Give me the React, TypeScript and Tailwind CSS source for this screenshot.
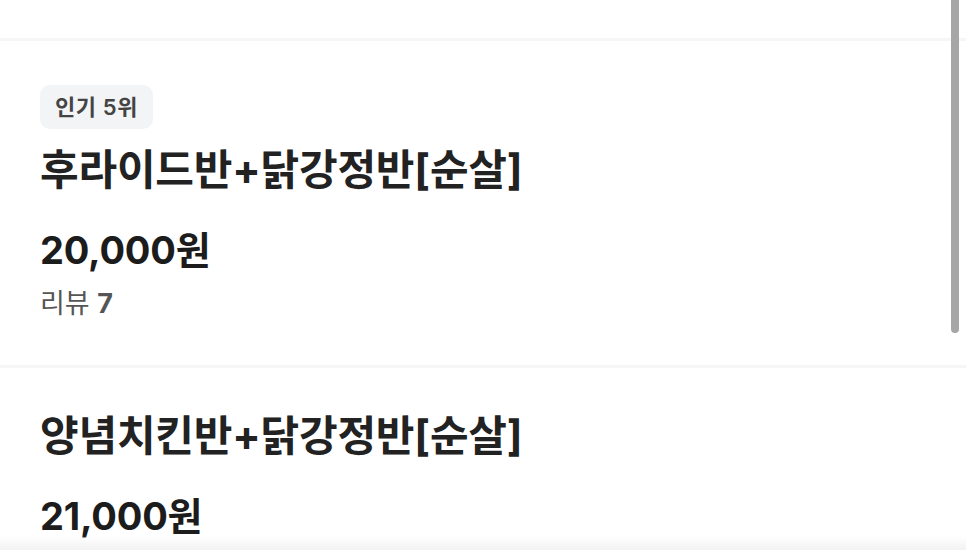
import React from "react";

type MenuItem = {
  rank?: number;
  name: string;
  price: string;
  reviews?: number;
};

const items: MenuItem[] = [
  { rank: 5, name: "후라이드반+닭강정반[순살]", price: "20,000원", reviews: 7 },
  { name: "양념치킨반+닭강정반[순살]", price: "21,000원" },
];

const font = { fontFamily: 'Inter, "Noto Sans CJK KR", sans-serif' };

const MenuRow: React.FC<{ item: MenuItem }> = ({ item }) => (
  <div className="px-10 pt-[44px] pb-[45px] border-b-[3px] border-[#f6f6f6]">
    {item.rank && (
      <div className="mb-[17px]">
        <span className="inline-flex items-center h-[44px] px-[15px] rounded-[10px] bg-[#f3f4f6] text-[22px] font-semibold text-[#444] tracking-[0.6px]">
          인기 {item.rank}위
        </span>
      </div>
    )}
    <h2 className="text-[42px] leading-[48px] font-bold text-[#222] tracking-[-0.2px]">
      {item.name}
    </h2>
    <p className="mt-[34px] text-[38px] leading-[44px] font-bold text-[#1c1c1c] tracking-[-0.2px]">
      {item.price}
    </p>
    {item.reviews !== undefined && (
      <p className="mt-[16px] text-[27px] leading-[32px] text-[#555]">
        리뷰 <span className="font-bold">{item.reviews}</span>
      </p>
    )}
  </div>
);

export default function App() {
  return (
    <div className="relative w-[966px] h-[550px] overflow-hidden bg-white" style={font}>
      <div className="h-[41px] border-b-[3px] border-[#f6f6f6]" />
      {items.map((item) => (
        <MenuRow key={item.name} item={item} />
      ))}
      {/* bottom bar shadow */}
      <div className="absolute left-0 right-0 bottom-0 h-[14px] bg-gradient-to-b from-transparent to-[#f2f2f2]" />
      {/* overlay scrollbar */}
      <div className="absolute left-[951px] top-0 w-[8px] h-[333px] rounded-b-full bg-[#a6a6a6]" />
    </div>
  );
}
